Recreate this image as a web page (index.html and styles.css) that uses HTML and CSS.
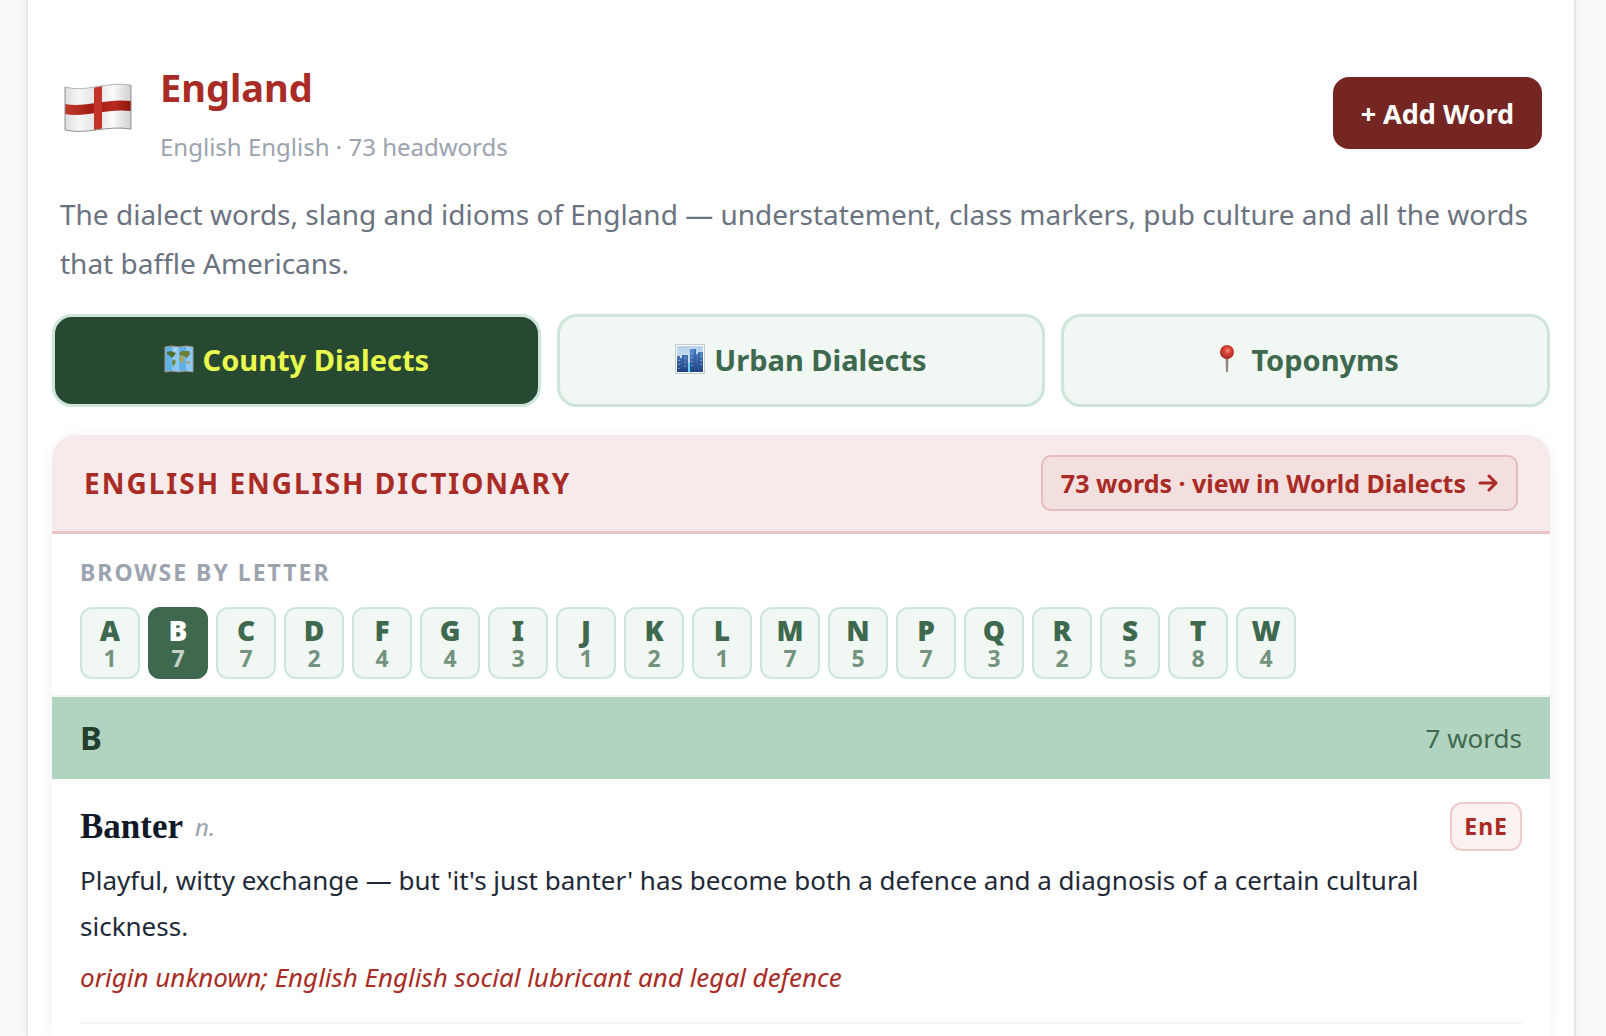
FILE: index.html
```html
<!DOCTYPE html>
<html lang="en">
<head>
	<meta charset="UTF-8">
	<meta name="viewport" content="width=device-width, initial-scale=1">
	<title>England - English English Dictionary</title>
	<link rel="stylesheet" href="styles.css">
</head>
<body>
	<main class="page">
		<header class="country">
			<svg class="flag" viewBox="0 0 68 52" aria-hidden="true">
				<defs>
					<linearGradient id="cloth" x1="0" y1="0" x2="1" y2="0">
						<stop offset="0" stop-color="#dcdcdc"/>
						<stop offset="0.2" stop-color="#f6f6f6"/>
						<stop offset="0.5" stop-color="#e2e2e2"/>
						<stop offset="0.72" stop-color="#fafafa"/>
						<stop offset="1" stop-color="#cfcfcf"/>
					</linearGradient>
					<linearGradient id="cross" x1="0" y1="0" x2="1" y2="0">
						<stop offset="0" stop-color="#c23a2e"/>
						<stop offset="0.4" stop-color="#a31d14"/>
						<stop offset="0.75" stop-color="#b82a20"/>
						<stop offset="1" stop-color="#8e150e"/>
					</linearGradient>
				</defs>
				<path d="M1 6C22 12 42 0 67 4V48C42 44 22 54 1 49Z" fill="url(#cloth)"/>
				<path d="M1 23C22 27 42 17 67 20V30C42 27 22 37 1 33Z" fill="url(#cross)"/>
				<path d="M30 6.500L38 4.700V47.500L30 49Z" fill="#c4332a"/>
				<path d="M1 6C22 12 42 0 67 4" fill="none" stroke="#b5b5b5" stroke-width="1"/>
				<path d="M67 4V48C42 44 22 54 1 49V6" fill="none" stroke="#8f8f8f" stroke-width="1"/>
			</svg>
			<div class="country-text">
				<h1>England</h1>
				<p>English English · 73 headwords</p>
			</div>
			<button type="button" class="add-word">+ Add Word</button>
		</header>

		<p class="intro">The dialect words, slang and idioms of England — understatement, class markers, pub culture and all the words that baffle Americans.</p>

		<nav class="tabs">
			<button type="button" class="tab active">
				<svg class="tab-icon" viewBox="0 0 30 30" aria-hidden="true">
					<path d="M1 3L8 2L15 3L22 2L29 3V28L22 27L15 28L8 27L1 28Z" fill="#62b0e8" stroke="#a39b86" stroke-width="1"/>
					<path d="M8 2.500L15 3.500V27.500L8 26.500ZM22 2.500L28.500 3.500V27.500L22 26.500Z" fill="#8cc8f2"/>
					<path d="M3 8L7 7L12 9L10 12L8 14L6 12L3 10Z" fill="#50702f"/>
					<path d="M9 15L12 17L11 20L9 23L8 18Z" fill="#75852f"/>
					<path d="M15 9L18 7L25 7L26 10L23 14L20 12L16 11Z" fill="#6d7d35"/>
					<path d="M15 12L19 12L20 15L18 20L16 16Z" fill="#b4a24b"/>
					<path d="M10 5L13 4L12 7Z" fill="#dce8ee"/>
					<path d="M23 17L26 18L25 20L23 19Z" fill="#ce8d3e"/>
				</svg>
				County Dialects
			</button>
			<button type="button" class="tab">
				<svg class="tab-icon" viewBox="0 0 30 30" aria-hidden="true">
					<defs>
						<linearGradient id="sky" x1="0" y1="0" x2="0" y2="1">
							<stop offset="0" stop-color="#b5d2e9"/>
							<stop offset="1" stop-color="#dcebf5"/>
						</linearGradient>
						<linearGradient id="tower" x1="0" y1="0" x2="0" y2="1">
							<stop offset="0" stop-color="#5d8fd0"/>
							<stop offset="1" stop-color="#1d3f7d"/>
						</linearGradient>
					</defs>
					<rect x="0.500" y="0.500" width="29" height="29" fill="#fff" stroke="#c3c9cc"/>
					<rect x="2" y="2" width="26" height="26" fill="url(#sky)"/>
					<path d="M2 12H5V14H7V11H13V28H2ZM15 5H21V10H23V8H28V28H15Z" fill="url(#tower)"/>
					<path d="M8 11V28M20 5V28M24 9V28" stroke="#2b549b" stroke-width="1"/>
					<path d="M13 19H15V28H13Z" fill="#65d5f2"/>
					<path d="M4 16V25M10 14V24M17 9V25M26 12V24" stroke="#a6c8ef" stroke-width="1" stroke-dasharray="1 3"/>
				</svg>
				Urban Dialects
			</button>
			<button type="button" class="tab">
				<svg class="tab-icon" viewBox="0 0 30 30" aria-hidden="true">
					<defs>
						<radialGradient id="pin" cx="0.55" cy="0.4" r="0.6">
							<stop offset="0" stop-color="#f78d80"/>
							<stop offset="0.4" stop-color="#dc4338"/>
							<stop offset="1" stop-color="#a32722"/>
						</radialGradient>
					</defs>
					<path d="M13.500 13H16.500L16 28H14Z" fill="#94857f"/>
					<circle cx="15" cy="8" r="7" fill="url(#pin)"/>
				</svg>
				Toponyms
			</button>
		</nav>

		<section class="dictionary">
			<div class="dictionary-header">
				<h2>English English Dictionary</h2>
				<a href="#" class="world-link">73 words · view in World Dialects
					<svg class="arrow" viewBox="0 0 20 20" aria-hidden="true"><path d="M2 10H18M11 3L18 10L11 17" fill="none" stroke="currentColor" stroke-width="3" stroke-linecap="round" stroke-linejoin="round"/></svg>
				</a>
			</div>

			<div class="browse">
				<h3>Browse by letter</h3>
				<div class="letters">
					<button type="button" class="letter"><b>A</b><span>1</span></button>
					<button type="button" class="letter active"><b>B</b><span>7</span></button>
					<button type="button" class="letter"><b>C</b><span>7</span></button>
					<button type="button" class="letter"><b>D</b><span>2</span></button>
					<button type="button" class="letter"><b>F</b><span>4</span></button>
					<button type="button" class="letter"><b>G</b><span>4</span></button>
					<button type="button" class="letter"><b>I</b><span>3</span></button>
					<button type="button" class="letter"><b>J</b><span>1</span></button>
					<button type="button" class="letter"><b>K</b><span>2</span></button>
					<button type="button" class="letter"><b>L</b><span>1</span></button>
					<button type="button" class="letter"><b>M</b><span>7</span></button>
					<button type="button" class="letter"><b>N</b><span>5</span></button>
					<button type="button" class="letter"><b>P</b><span>7</span></button>
					<button type="button" class="letter"><b>Q</b><span>3</span></button>
					<button type="button" class="letter"><b>R</b><span>2</span></button>
					<button type="button" class="letter"><b>S</b><span>5</span></button>
					<button type="button" class="letter"><b>T</b><span>8</span></button>
					<button type="button" class="letter"><b>W</b><span>4</span></button>
				</div>
			</div>

			<div class="letter-bar">
				<h3>B</h3>
				<span>7 words</span>
			</div>

			<article class="entry">
				<div class="entry-head">
					<h4>Banter</h4>
					<em>n.</em>
					<span class="badge">EnE</span>
				</div>
				<p class="definition">Playful, witty exchange — but 'it's just banter' has become both a defence and a diagnosis of a certain cultural sickness.</p>
				<p class="origin">origin unknown; English English social lubricant and legal defence</p>
			</article>
		</section>
	</main>
</body>
</html>
```
FILE: styles.css
```css
* {
	box-sizing: border-box;
}
body {
	margin: 0;
	font-family: "Noto Sans", sans-serif;
	background-color: #f9f9f9;
	color: #1f2937;
}
h1, h2, h3, h4, p {
	margin: 0;
}
button {
	font-family: inherit;
	cursor: pointer;
}
.page {
	display: flex;
	flex-direction: column;
	min-height: 100vh;
	margin: 0 30px 0 26px;
	padding: 59px 24px 0;
	background-color: #fff;
	border: solid #e5e7eb;
	border-width: 0 2px;
	box-shadow: 0 0 8px rgba(0,0,0,0.06);
}

/* Country header */
.country {
	display: flex;
	align-items: center;
	gap: 24px;
	padding: 0 8px;
}
.flag {
	width: 76px;
	height: 52px;
	margin-bottom: 12px;
}
.country-text {
	flex: 1;
}
.country-text h1 {
	font-size: 38px;
	line-height: 56px;
	color: #a92b25;
}
.country-text p {
	margin-top: 12px;
	font-size: 24px;
	line-height: 40px;
	color: #9ca3af;
}
.add-word {
	height: 72px;
	padding: 0 28px;
	font-size: 27px;
	font-weight: bold;
	color: #fff;
	background-color: #752522;
	border: none;
	border-radius: 16px;
}
.intro {
	padding: 0 8px;
	margin: 23px 0 26px;
	font-size: 28px;
	line-height: 49px;
	color: #6b7280;
}

/* Dialect tabs */
.tabs {
	display: grid;
	grid-template-columns: repeat(3, 1fr);
	gap: 16px;
	margin-bottom: 28px;
}
.tab {
	display: flex;
	align-items: center;
	justify-content: center;
	gap: 9px;
	height: 93px;
	padding: 0 6px 3px;
	font-size: 29px;
	font-weight: bold;
	color: #3e694f;
	background-color: #f1f7f3;
	border: 3px solid #cde6d9;
	border-radius: 20px;
}
.tab.active {
	color: #e9fb4f;
	background-color: #284931;
}
.tab-icon {
	width: 30px;
	height: 30px;
}

/* Dictionary card */
.dictionary {
	flex: 1;
	border-radius: 24px 24px 0 0;
	box-shadow: 0 2px 16px rgba(0,0,0,0.06);
}
.dictionary-header {
	display: flex;
	align-items: center;
	justify-content: space-between;
	padding: 20px 32px;
	background-color: #f7eaea;
	border-bottom: 3px solid #e9c5c5;
	border-radius: 24px 24px 0 0;
}
.dictionary-header h2 {
	font-size: 28px;
	letter-spacing: 2px;
	text-transform: uppercase;
	color: #a92b25;
}
.world-link {
	display: flex;
	align-items: center;
	gap: 12px;
	height: 56px;
	padding: 0 18px;
	font-size: 25px;
	font-weight: bold;
	color: #a92b25;
	background-color: #f3dfde;
	border: 2px solid #e6bcba;
	border-radius: 10px;
	text-decoration: none;
}
.arrow {
	width: 20px;
	height: 20px;
}
.browse {
	padding: 20px 28px 16px;
	border-bottom: 2px solid #f3f4f6;
}
.browse h3 {
	margin-bottom: 16px;
	font-size: 23px;
	line-height: 37px;
	letter-spacing: 2px;
	text-transform: uppercase;
	color: #9ca3af;
}
.letters {
	display: flex;
	flex-wrap: wrap;
	gap: 8px;
}
.letter {
	width: 60px;
	height: 72px;
	padding: 0;
	font-size: 28px;
	font-weight: bold;
	line-height: 30px;
	color: #3e694f;
	background-color: #f1f7f3;
	border: 2px solid #cde6d9;
	border-radius: 12px;
}
.letter b {
	display: block;
}
.letter span {
	display: block;
	font-size: 23px;
	line-height: 26px;
	opacity: 0.7;
}
.letter.active {
	color: #fff;
	background-color: #3e694f;
	border-color: #3e694f;
}
.letter-bar {
	display: flex;
	align-items: center;
	justify-content: space-between;
	padding: 16px 28px;
	line-height: 50px;
	background-color: #b1d4c0;
}
.letter-bar h3 {
	font-size: 33px;
	color: #243d2c;
}
.letter-bar span {
	font-size: 26px;
	color: #3e694f;
}

/* Word entries */
.entry {
	margin: 0 28px;
	padding: 23px 0 24px;
	border-bottom: 2px solid #f3f4f6;
}
.entry-head {
	display: flex;
	align-items: center;
	gap: 12px;
}
.entry-head h4 {
	font-family: Georgia, "Liberation Serif", serif;
	font-size: 35px;
	line-height: 40px;
	color: #111827;
}
.entry-head em {
	font-size: 24px;
	color: #9ca3af;
}
.badge {
	margin-left: auto;
	padding: 0 12px;
	font-size: 23px;
	font-weight: bold;
	line-height: 45px;
	letter-spacing: 1px;
	color: #a92b25;
	background-color: #fbf1f0;
	border: 2px solid #edcccb;
	border-radius: 12px;
}
.definition {
	margin: 6px 0;
	font-size: 26px;
	line-height: 46px;
}
.origin {
	margin-top: 7px;
	font-size: 26px;
	font-style: italic;
	line-height: 42px;
	color: #a92b25;
}
```
